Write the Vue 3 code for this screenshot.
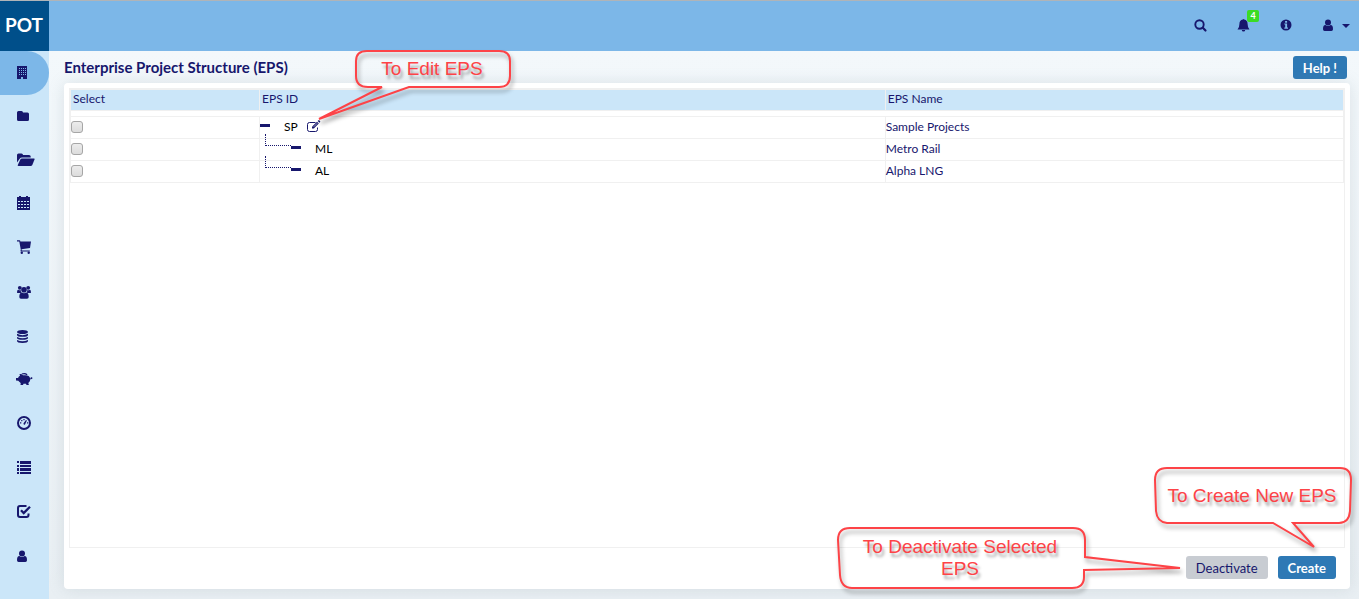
<script setup>
import { ref } from 'vue'

const ink = '#17176d'

const navItems = [
  { label: 'Enterprise structure', icon: 'building' },
  { label: 'Projects', icon: 'folder' },
  { label: 'Open projects', icon: 'folderOpen' },
  { label: 'Calendar', icon: 'calendar' },
  { label: 'Procurement', icon: 'cart' },
  { label: 'Resources', icon: 'users' },
  { label: 'Data', icon: 'database' },
  { label: 'Budget', icon: 'piggy' },
  { label: 'Dashboard', icon: 'gauge' },
  { label: 'Lists', icon: 'list' },
  { label: 'Approvals', icon: 'check' },
  { label: 'Users', icon: 'user' },
]

const raise = (shape) => `<g transform="translate(0 -1)">${shape}</g>`

const icons = {
  building:
    '<path fill-rule="evenodd" d="M0 1h10v13H6v-2H4v2H0zM2 3v1h1V3zm2 0v1h1V3zm2 0v1h1V3zm2 0v1h1V3zM2 5v1h1V5zm2 0v1h1V5zm2 0v1h1V5zm2 0v1h1V5zM2 7v1h1V7zm2 0v1h1V7zm2 0v1h1V7zm2 0v1h1V7zM2 9v1h1V9zm2 0v1h1V9zm2 0v1h1V9zm2 0v1h1V9z"/>',
  folder: '<path d="M1.500 2h3q1.500 0 1.500 1.500h4.500q1.500 0 1.500 1.500v5.500q0 1.500-1.500 1.500h-9Q0 12 0 10.500v-7Q0 2 1.500 2z"/>',
  folderOpen: raise(
    '<path d="M0 10.500V3q0-1.500 1.500-1.500h3Q6 1.500 6 3h6q1.700 0 1.700 1.500v1H5q-1.500 0-2.300 1.300z"/><path d="M5 6.500h12q.9 0 .5 1l-2.200 5.400q-.5 1.100-1.600 1.100H1.500q-1.200 0-.7-1.100l2.400-5.200Q3.800 6.500 5 6.500z"/>'
  ),
  calendar: raise(
    '<path fill-rule="evenodd" d="M2 0h2v1h5V0h2v1h2v13H0V1h2zM1 5v1h2V5zm3 0v1h2V5zm3 0v1h2V5zm3 0v1h2V5zM1 8v1h2V8zm3 0v1h2V8zm3 0v1h2V8zm3 0v1h2V8zM1 11v1h2v-1zm3 0v1h2v-1zm3 0v1h2v-1zm3 0v1h2v-1z"/>'
  ),
  cart: raise(
    '<path d="M0 .3h2.500q.7 0 .9 1.200H14l-1 6.500-8.500 1.200.3 1.300h8v1H4q-.7 0-.5-.8l.3-.9L2.300 1.500H0z"/><circle cx="4.800" cy="12.800" r="1.200"/><circle cx="11.700" cy="12.800" r="1.200"/>'
  ),
  users:
    '<circle cx="2.800" cy="2.800" r="1.900"/><circle cx="11.200" cy="2.800" r="1.900"/><circle cx="7" cy="4.700" r="2.800"/><path d="M0 7.500Q0 4.500 1.200 4.700q1.500 1 2.600.3-.2 2 .7 3H1.200Q0 8 0 7.500zM14 7.500q0-3-1.200-2.800-1.500 1-2.600.3.200 2-.7 3h3.300q1.200 0 1.200-.5zM2.300 12q0-4.500 2.500-4.500Q7 9 9.200 7.500q2.500 0 2.500 4.500 0 1.800-1.700 1.800H4q-1.700 0-1.700-1.800z"/>',
  database:
    '<ellipse cx="5.500" cy="3" rx="5.500" ry="2"/><path d="M0 4.800q5.500 2.800 11 0v1.100q0 1.900-5.500 1.900T0 5.900zM0 7.900q5.500 2.700 11 0V9q0 1.800-5.500 1.800T0 9zM0 11q5.500 2.700 11 0v1.100q0 1.900-5.500 1.900T0 12.100z"/>',
  piggy: raise(
    '<path d="M-1 6h2q.8-1.700 2-2.300L2.500 2Q5 1.800 6 3.300q6.500-.9 7.200 3.200.7.200.6-.7-.3-.6.300-.7 1 0 .7.700h.9q-.2 1.500-2.400 1.500 0 2-2 3.700l.6 2H9.500L9 11.800H6.500L6 13H3.500l.2-2Q2 9.800 1.300 8.800L-1 8.500z"/><path d="M4.500 1.600Q8 0 10.500 2.300l-.7 1Q7.500 1.800 5.600 2.600z"/>'
  ),
  gauge: raise(
    '<path fill-rule="evenodd" d="M7 0a7 7 0 1 1 0 14A7 7 0 0 1 7 0zm0 2a5 5 0 1 0 0 10A5 5 0 0 0 7 2z"/><path d="M6.500 7.300 9 4l.9.500-1.900 3.900q-1.600.9-1.500-1.100zM3 6.300h1.300v1.200H3zM4.200 4h1.200v1.200H4.200zM6.400 3h1.200v1.200H6.400zM10 6.300h1.300v1.200H10z"/>'
  ),
  list: raise(
    '<path d="M0 1h2v2H0zm3 0h11v3H3zM0 5h2v2H0zm3 0h11v2H3zM0 8h2v3H0zm3 0h11v3H3zm-3 4h2v2H0zm3 0h11v2H3z"/>'
  ),
  check: raise(
    '<path fill="none" stroke="currentColor" stroke-width="2" d="M9.500 2H3Q1 2 1 4v7q0 2 2 2h6.500q2 0 2-2V9.500"/><path fill="none" stroke="currentColor" stroke-width="2.300" d="m4 6.300 2.700 2.700L13 2.700"/>'
  ),
  user: '<circle cx="5" cy="4.500" r="3"/><path d="M0 11.200q0-4.200 2.400-4.200Q5 9 7.600 7 10 7 10 11.200q0 1.800-1.600 1.800H1.600Q0 13 0 11.200z"/>',
  search:
    '<circle cx="5.500" cy="6.500" r="4.200" fill="none" stroke="currentColor" stroke-width="1.900"/><path stroke="currentColor" stroke-width="2.200" stroke-linecap="round" d="m8.800 9.800 2.700 2.700"/>',
  bell: '<path d="M5.800 1.500q.7-1.200 1.400 0 3.400.8 3.400 4.500 0 4 1.900 5.500H.5Q2.400 10 2.400 6q0-3.700 3.400-4.500zM4.800 12h3.400q0 1.500-1.700 1.500T4.800 12z"/>',
  info: '<path fill-rule="evenodd" d="M6 1.500a5.500 5.500 0 1 1 0 11 5.500 5.500 0 0 1 0-11zM5.100 3v1.700h2V3zM4.300 5.600v1h.9v3h-.9v1.100H8V9.600h-.9v-4z"/>',
  edit: '<path fill="none" stroke="currentColor" d="M8.500 2.500h-6q-2 0-2 2v5q0 2 2 2h6q2 0 2-2v-2"/><path d="m5 6.700 5-5L11.800 3.500 6.800 8.500H5z"/><path d="m10.700 1 .7-.7q.4-.3.800 0l.9.900q.4.400 0 .8l-.7.700z"/><path stroke="#fff" stroke-width=".6" d="m6.700 6.800 3.600-3.600"/>',
}

const rows = ref([
  { id: 'SP', name: 'Sample Projects', child: false, selected: false },
  { id: 'ML', name: 'Metro Rail', child: true, selected: false },
  { id: 'AL', name: 'Alpha LNG', child: true, selected: false },
])
</script>

<template>
  <div class="screen">
    <header class="topbar">
      <a href="#" class="brand">POT</a>
      <div class="tools">
        <button type="button" aria-label="Search">
          <svg class="icon" viewBox="0 0 18 16" v-html="icons.search"></svg>
        </button>
        <button type="button" class="alerts" aria-label="Notifications">
          <svg class="icon" viewBox="0 0 18 16" v-html="icons.bell"></svg>
          <span class="badge">4</span>
        </button>
        <button type="button" aria-label="Information">
          <svg class="icon" viewBox="0 0 18 16" v-html="icons.info"></svg>
        </button>
        <button type="button" class="account" aria-label="Account">
          <svg class="icon" viewBox="0 0 18 16" v-html="icons.user"></svg>
          <span class="caret"></span>
        </button>
      </div>
    </header>

    <div class="body">
      <nav class="sidebar" aria-label="Main">
        <a v-for="(item, i) in navItems" :key="item.icon" href="#" :class="{ active: i === 0 }" :aria-label="item.label">
          <svg class="icon" viewBox="0 0 18 16" v-html="icons[item.icon]"></svg>
        </a>
      </nav>

      <main class="content">
        <div class="heading">
          <h1>Enterprise Project Structure (EPS)</h1>
          <button type="button" class="btn primary">Help !</button>
        </div>

        <section class="card">
          <div class="grid">
            <table>
              <colgroup>
                <col class="c-select" />
                <col />
                <col class="c-name" />
              </colgroup>
              <thead>
                <tr>
                  <th>Select</th>
                  <th>EPS ID</th>
                  <th>EPS Name</th>
                </tr>
              </thead>
              <tbody>
                <tr class="spacer"><td colspan="3"></td></tr>
                <tr v-for="row in rows" :key="row.id">
                  <td><input v-model="row.selected" type="checkbox" :aria-label="'Select ' + row.name" /></td>
                  <td>
                    <div class="node" :class="{ child: row.child }">
                      <span v-if="row.child" class="branch"></span>
                      <span class="dash"></span>
                      <span class="code">{{ row.id }}</span>
                      <button v-if="!row.child" type="button" class="edit" aria-label="Edit EPS">
                        <svg viewBox="0 0 14 14" v-html="icons.edit"></svg>
                      </button>
                    </div>
                  </td>
                  <td class="name">{{ row.name }}</td>
                </tr>
              </tbody>
            </table>
          </div>
          <div class="actions">
            <button type="button" class="btn muted">Deactivate</button>
            <button type="button" class="btn primary">Create</button>
          </div>
        </section>
      </main>
    </div>

    <div class="callout edit-note">
      <svg viewBox="0 0 196 76">
        <path d="M65 39H51Q39 39 39 28V13Q39 3 50 3H182Q193 3 193 13V28Q193 39 182 39H92L2 71Z" />
      </svg>
      <p>To Edit EPS</p>
    </div>
    <div class="callout create-note">
      <svg viewBox="0 0 200 84">
        <path d="M120 57H14Q4 56 3 45L2 14Q2 2 14 2H187Q198 2 198 14L197 45Q196 57 186 57H140L161 81Z" />
      </svg>
      <p>To Create New EPS</p>
    </div>
    <div class="callout deactivate-note">
      <svg viewBox="0 0 348 66">
        <path d="M249 32V15Q249 3 237 3H14Q2 3 2 15L4 50Q5 63 16 63H236Q248 63 248 52V45L344 43Z" />
      </svg>
      <p>To Deactivate Selected<br />EPS</p>
    </div>
  </div>
</template>

<style>
body {
  margin: 0;
}
</style>

<style scoped>
.screen {
  position: relative;
  display: flex;
  flex-direction: column;
  min-height: 100vh;
  box-sizing: border-box;
  border-top: 1px solid #b0b4b8;
  font-family: Lato, 'Liberation Sans', sans-serif;
  font-size: 12px;
  color: v-bind(ink);
}
button {
  font: inherit;
  color: inherit;
  border: 0;
  padding: 0;
  background: none;
  cursor: pointer;
}
.icon {
  display: block;
  width: 18px;
  height: 16px;
  fill: currentColor;
  overflow: visible;
}
.topbar {
  display: flex;
  justify-content: space-between;
  height: 50px;
  background: #7cb7e8;
}
.brand {
  width: 48px;
  padding-right: 1px;
  line-height: 47px;
  text-align: center;
  font-size: 19px;
  font-weight: 700;
  color: #fff;
  text-decoration: none;
  background: #004f8a;
}
.tools {
  display: flex;
  align-items: center;
  gap: 25px;
  padding-right: 9px;
}
.alerts {
  position: relative;
}
.badge {
  position: absolute;
  left: 10px;
  top: -8px;
  width: 12px;
  height: 12px;
  border-radius: 2px;
  background: #3bdc24;
  color: #fff;
  font-size: 9px;
  font-weight: 700;
  line-height: 11px;
  text-align: center;
}
.account {
  display: flex;
  align-items: center;
  gap: 1px;
}
.caret {
  border: 4px solid transparent;
  border-top-color: currentColor;
  border-bottom: 0;
}
.body {
  flex: 1;
  display: flex;
}
.sidebar {
  width: 49px;
  background: #cbe6f9;
}
.sidebar a {
  display: flex;
  align-items: center;
  height: 44px;
  padding-left: 17px;
  color: inherit;
}
.sidebar a.active {
  background: #7cb7e8;
  border-radius: 0 22px 22px 0;
}
.content {
  flex: 1;
  min-width: 0;
  display: flex;
  flex-direction: column;
  padding: 5px 9px 10px 15px;
  background: linear-gradient(#f3f8fb, #e9eff3);
}
.heading {
  display: flex;
  justify-content: space-between;
  align-items: flex-start;
  height: 23px;
  padding-right: 3px;
  margin-bottom: 4px;
}
h1 {
  margin: 0;
  font-size: 15px;
  line-height: 22px;
  font-weight: 700;
}
.btn {
  height: 23px;
  padding: 0 10px;
  border-radius: 3px;
  font-size: 13px;
}
.primary {
  background: #2e79b5;
  color: #fff;
  font-weight: 700;
}
.muted {
  background: #c8ccd2;
}
.card {
  flex: 1;
  display: flex;
  flex-direction: column;
  padding: 5px;
  border-radius: 4px;
  background: #fff;
  box-shadow: 0 0 16px rgba(120, 140, 150, 0.2);
}
.grid {
  flex: 1;
  border: 1px solid #f0f0f0;
}
table {
  width: 100%;
  table-layout: fixed;
  border-collapse: collapse;
}
.c-select {
  width: 189px;
}
.c-name {
  width: 36%;
}
th {
  height: 17px;
  padding: 0 2px 3px;
  text-align: left;
  font-weight: 400;
  background: #cbe6f9;
  border: 1px solid #f0f0f0;
}
td {
  height: 19px;
  padding: 0 0 2px;
  border: 1px solid #f0f0f0;
}
.spacer td {
  height: 5px;
  padding: 0;
}
input {
  appearance: none;
  display: block;
  box-sizing: border-box;
  width: 12px;
  height: 12px;
  margin: 0;
  border: 1px solid #a6a6a6;
  border-radius: 3px;
  background: linear-gradient(#ececec, #dcdcdc);
}
input:checked {
  background: #2e79b5;
}
.node {
  display: flex;
  align-items: center;
  height: 19px;
  color: #000;
}
.branch {
  align-self: flex-start;
  width: 26px;
  height: 12px;
  margin: -5px 0 0 5px;
  box-sizing: border-box;
  border: 1px dotted v-bind(ink);
  border-width: 0 0 1px 1px;
}
.dash {
  width: 10px;
  height: 3px;
  margin: 0 14px 2px 0;
  background: v-bind(ink);
}
.edit {
  margin-left: 9px;
  color: v-bind(ink);
}
.edit svg {
  display: block;
  width: 14px;
  height: 14px;
  fill: currentColor;
}
.actions {
  display: flex;
  justify-content: flex-end;
  gap: 10px;
  padding: 8px 9px 5px;
}
.callout {
  position: absolute;
  pointer-events: none;
  font-family: 'Liberation Sans', Arial, sans-serif;
  font-size: 19px;
  line-height: 22px;
  text-align: center;
  color: #fd4347;
}
.callout svg {
  position: absolute;
  inset: 0;
  width: 100%;
  height: 100%;
  overflow: visible;
  fill: none;
  stroke: currentColor;
  stroke-width: 2;
  filter: drop-shadow(2px 4px 2px rgba(0, 0, 0, 0.35));
}
.callout p {
  position: relative;
  margin: 0;
  text-shadow: 2px 4px 3px rgba(0, 0, 0, 0.35);
}
.edit-note {
  left: 317px;
  top: 47px;
  width: 196px;
  height: 76px;
}
.edit-note p {
  padding: 10px 0 0 34px;
}
.create-note {
  right: 6px;
  bottom: 49px;
  width: 200px;
  height: 84px;
}
.create-note p {
  padding: 19px 2px 0 0;
}
.deactivate-note {
  right: 175px;
  bottom: 8px;
  width: 348px;
  height: 66px;
}
.deactivate-note p {
  padding: 11px 100px 0 0;
}
</style>
